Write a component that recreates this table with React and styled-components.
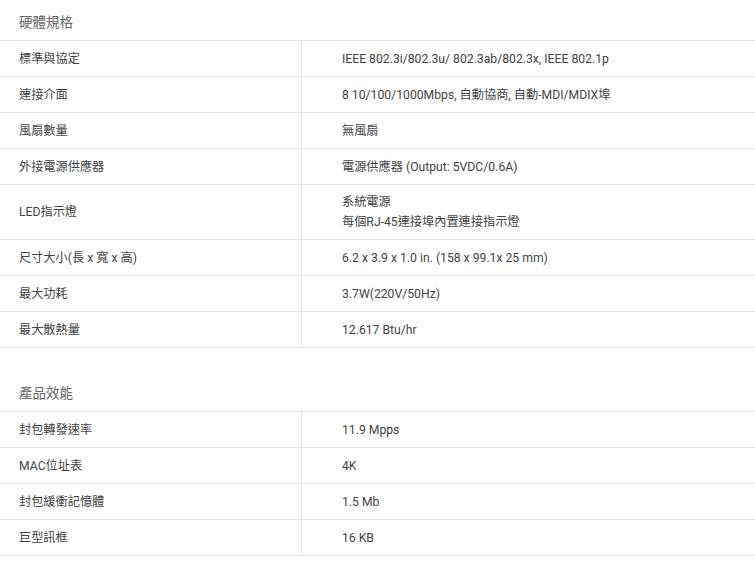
import React from "react";
import styled, { createGlobalStyle } from "styled-components";

const GlobalStyle = createGlobalStyle`
  html, body {
    margin: 0;
    padding: 0;
    background: #fff;
  }
  body {
    font-family: Roboto, "Noto Sans CJK TC", "Noto Sans", sans-serif;
    color: #333;
  }
`;

/* ---------------- PAGE ---------------- */
const Page = styled.div`
  width: 755px;
  overflow: hidden;
`;

const Section = styled.section`
  & + & {
    margin-top: 23px;
  }
`;

const Title = styled.h3`
  margin: 0;
  height: 40px;
  display: flex;
  align-items: center;
  padding: 1px 0 0 19px;
  box-sizing: border-box;
  font-size: 13.5px;
  font-weight: 400;
  color: #666;
`;

/* ---------------- TABLE ---------------- */
const Table = styled.div`
  border-top: 1px solid #e3e3e3;
`;

const Row = styled.div`
  display: grid;
  grid-template-columns: 302px 1fr;
  border-bottom: 1px solid #e3e3e3;
`;

const Cell = styled.div`
  min-height: 35px;
  display: flex;
  flex-direction: column;
  justify-content: center;
  padding: ${(p) => (p.$multi ? "7px" : "0")} 0;
  font-size: 12.2px;
  line-height: 20px;
  color: #444;
`;

const Label = styled(Cell)`
  padding-left: 19px;
  border-right: 1px solid #e3e3e3;
`;

const Value = styled(Cell)`
  padding-left: 40px;
`;

const sections = [
  {
    title: "硬體規格",
    rows: [
      ["標準與協定", ["IEEE 802.3i/802.3u/ 802.3ab/802.3x, IEEE 802.1p"]],
      ["連接介面", ["8 10/100/1000Mbps, 自動協商, 自動-MDI/MDIX埠"]],
      ["風扇數量", ["無風扇"]],
      ["外接電源供應器", ["電源供應器 (Output: 5VDC/0.6A)"]],
      ["LED指示燈", ["系統電源", "每個RJ-45連接埠內置連接指示燈"]],
      ["尺寸大小(長 x 寬 x 高)", ["6.2 x 3.9 x 1.0 in. (158 x 99.1x 25 mm)"]],
      ["最大功耗", ["3.7W(220V/50Hz)"]],
      ["最大散熱量", ["12.617 Btu/hr"]],
    ],
  },
  {
    title: "產品效能",
    rows: [
      ["封包轉發速率", ["11.9 Mpps"]],
      ["MAC位址表", ["4K"]],
      ["封包緩衝記憶體", ["1.5 Mb"]],
      ["巨型訊框", ["16 KB"]],
    ],
  },
];

export default function App() {
  return (
    <Page>
      <GlobalStyle />
      {sections.map((s) => (
        <Section key={s.title}>
          <Title>{s.title}</Title>
          <Table>
            {s.rows.map(([label, values]) => {
              const multi = values.length > 1;
              return (
                <Row key={label}>
                  <Label $multi={multi}>{label}</Label>
                  <Value $multi={multi}>
                    {values.map((v) => (
                      <span key={v}>{v}</span>
                    ))}
                  </Value>
                </Row>
              );
            })}
          </Table>
        </Section>
      ))}
    </Page>
  );
}
